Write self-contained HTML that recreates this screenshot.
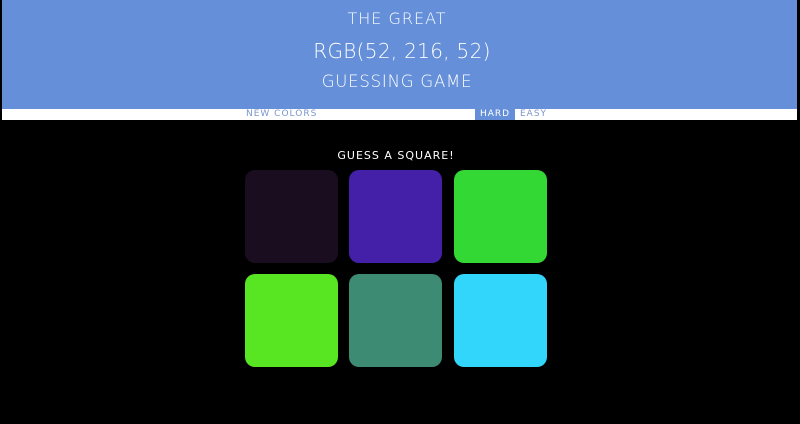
<!DOCTYPE html>
<html><head><style>
body{margin:0;width:800px;height:424px;background:#000;overflow:hidden;font-family:"DejaVu Sans","Liberation Sans",sans-serif;position:relative}
#h{position:absolute;left:2px;top:0;width:795px;height:109px;background:#6590d9;color:#fff;text-align:center}
#h div{position:absolute;left:0;right:0;text-transform:uppercase;letter-spacing:0.3px}
#bar{position:absolute;left:2px;top:109px;width:795px;height:11px;background:#fff;font-size:9px;letter-spacing:1px;color:#7b96cc;line-height:11px}
.sq{position:absolute;width:93px;height:93px;border-radius:10px}
</style></head><body>
<div id="h">
<div style="top:9px;font-size:16px;font-weight:300;letter-spacing:1px;left:-5px">The Great</div>
<div style="top:39px;font-size:20px;font-weight:300;left:5px">RGB(52, 216, 52)</div>
<div style="top:72px;font-size:16.5px;font-weight:300;letter-spacing:0.8px;left:-5px">Guessing Game</div>
</div>
<div id="bar">
<span style="position:absolute;left:244px">NEW COLORS</span>
<span style="position:absolute;left:473px;width:40px;height:11px;background:#6590d9;color:#fff;padding-left:5px;box-sizing:border-box">HARD</span>
<span style="position:absolute;left:518px">EASY</span>
</div>
<div style="position:absolute;top:149px;left:0;width:792px;text-align:center;color:#fff;font-size:11px;letter-spacing:1px">GUESS A SQUARE!</div>
<div class="sq" style="left:245px;top:170px;background:#1a0d1f"></div>
<div class="sq" style="left:349px;top:170px;background:#4420a8"></div>
<div class="sq" style="left:454px;top:170px;background:#34d834"></div>
<div class="sq" style="left:245px;top:274px;background:#58e522"></div>
<div class="sq" style="left:349px;top:274px;background:#3e8b74"></div>
<div class="sq" style="left:454px;top:274px;background:#32d6fb"></div>
</body></html>
